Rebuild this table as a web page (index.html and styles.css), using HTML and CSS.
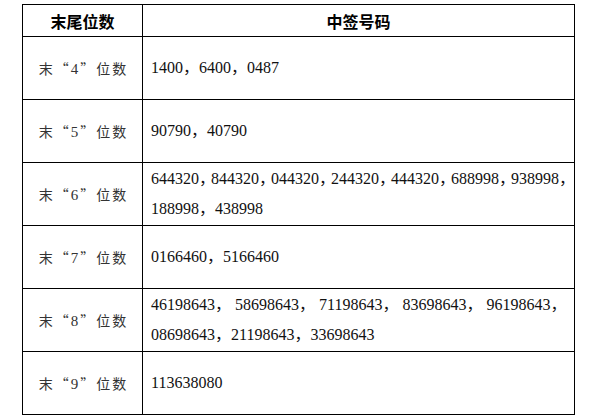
FILE: index.html
```html
<!DOCTYPE html>
<html lang="zh-CN">
<head>
<meta charset="utf-8">
<title>中签号码</title>
<link rel="stylesheet" href="styles.css">
</head>
<body>
<table class="lottery">
  <colgroup><col class="col-digit"><col class="col-num"></colgroup>
  <thead>
    <tr><th>末尾位数</th><th>中签号码</th></tr>
  </thead>
  <tbody>
    <tr><td class="label">末“<span class="d">4</span>”位数</td><td class="nums"><span class="line">1400，6400，0487</span></td></tr>
    <tr><td class="label">末“<span class="d">5</span>”位数</td><td class="nums"><span class="line">90790，40790</span></td></tr>
    <tr><td class="label">末“<span class="d">6</span>”位数</td><td class="nums"><span class="line">644320<span class="cm">，</span>844320<span class="cm">，</span>044320<span class="cm">，</span>244320<span class="cm">，</span>444320<span class="cm">，</span>688998<span class="cm">，</span>938998<span class="cm">，</span></span><span class="line">188998，438998</span></td></tr>
    <tr><td class="label">末“<span class="d">7</span>”位数</td><td class="nums"><span class="line">0166460，5166460</span></td></tr>
    <tr><td class="label">末“<span class="d">8</span>”位数</td><td class="nums"><span class="line">46198643， 58698643， 71198643， 83698643， 96198643，</span><span class="line">08698643，21198643，33698643</span></td></tr>
    <tr><td class="label">末“<span class="d">9</span>”位数</td><td class="nums"><span class="line">113638080</span></td></tr>
  </tbody>
</table>
</body>
</html>
```
FILE: styles.css
```css
html, body {
  margin: 0;
  background: #ffffff;
}
body {
  padding: 4px 0 0 22px;
}
.lottery {
  border-collapse: collapse;
  table-layout: fixed;
  width: 553px;
}
.col-digit { width: 120px; }
.lottery th,
.lottery td {
  border: 1px solid #000;
  padding: 0;
  vertical-align: middle;
}
.lottery th {
  height: 31px;
  font-family: "Noto Sans CJK SC", sans-serif;
  font-weight: 700;
  font-size: 16px;
  color: #000;
  text-align: center;
  line-height: 20px;
}
.lottery td {
  height: 62px;
}
.lottery td.label {
  text-align: center;
  font-family: "Noto Sans CJK SC", sans-serif;
  font-feature-settings: "fwid" 1;
  font-size: 14px;
  line-height: 24px;
  letter-spacing: 2px;
  color: #333;
  padding-left: 2px;
}
.label .d {
  font-family: "Liberation Serif", "Times New Roman", serif;
  font-feature-settings: normal;
  font-size: 15px;
}
.lottery td.nums {
  padding-left: 8px;
  font-family: "Liberation Serif", "Times New Roman", "Noto Sans CJK SC", serif;
  font-size: 16px;
  line-height: 20px;
  color: #111;
}
.line {
  display: flex;
  align-items: center;
  height: 30px;
  white-space: nowrap;
}
.cm {
  letter-spacing: -4px;
}
```
